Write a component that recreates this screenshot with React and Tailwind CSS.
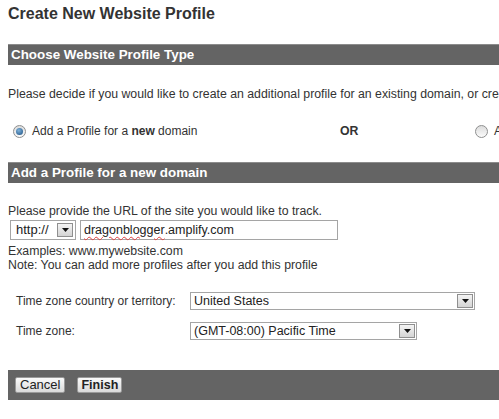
import React from 'react';

const DropButton = () => (
  <span className="flex h-full w-[16px] items-center justify-center border border-[#8f8f8f] bg-gradient-to-b from-[#f4f4f4] to-[#d4d4d4]">
    <svg width="7" height="4" viewBox="0 0 7 4">
      <path d="M0 0 H7 L3.5 4 Z" fill="#111" />
    </svg>
  </span>
);

const SelectBox = ({ value, width }) => (
  <div
    className={`flex h-[18px] items-center justify-between border border-[#a5a5a5] bg-white p-px ${width}`}
  >
    <span className="pl-[2px] text-[12.5px] leading-[14px] text-[#222]">{value}</span>
    <DropButton />
  </div>
);

const Radio = ({ checked }) => (
  <span className="flex h-[13px] w-[13px] items-center justify-center rounded-full border border-[#8e8f8f] bg-gradient-to-b from-[#dcdcdc] to-[#fbfbfb]">
    {checked && <span className="h-[7px] w-[7px] rounded-full bg-[radial-gradient(circle_at_40%_35%,#7fb2da,#1b4f82)]" />}
  </span>
);

const SectionBar = ({ title, className }) => (
  <div
    className={`h-[21px] border-t border-[#8c8c8c] bg-[#646464] pl-[3px] text-[13.4px] font-bold leading-[20px] text-white ${className}`}
  >
    {title}
  </div>
);

const App = () => {
  return (
    <div className="h-[419px] w-[499px] overflow-hidden bg-white font-['Liberation_Sans',Arial,sans-serif] text-[12.3px] text-[#333]">
      <div className="w-[760px] pl-2 pt-[4px]">
        <h1 className="text-[16px] font-bold leading-[20px] text-[#333]">
          Create New Website Profile
        </h1>

        <SectionBar title="Choose Website Profile Type" className="mt-[20px]" />

        <p className="mt-[21px] leading-[16px]">
          Please decide if you would like to create an additional profile for an existing domain, or create a new profile
        </p>

        <div className="mt-[21px] flex h-[16px] items-center">
          <span className="ml-[5px]">
            <Radio checked />
          </span>
          <span className="ml-[6px] w-[308px] text-[12px]">
            Add a Profile for a <b>new</b> domain
          </span>
          <span className="w-[135px] font-bold">OR</span>
          <Radio />
          <span className="ml-[6px]">Add a Profile for an existing domain</span>
        </div>

        <SectionBar title="Add a Profile for a new domain" className="mt-[23px]" />

        <p className="mt-[20px] leading-[16px]">Please provide the URL of the site you would like to track.</p>

        <div className="mt-px flex h-[20px] items-center">
          <div className="ml-[2px] flex h-[20px] w-[66px] items-center justify-between border border-[#a5a5a5] p-[2px]">
            <span className="pl-[3px] text-[13px] leading-[14px] text-[#222]">http://</span>
            <DropButton />
          </div>
          <div className="ml-[4px] flex h-[20px] w-[258px] items-center border border-[#a5a5a5] pl-[3px] text-[12.5px] text-[#222]">
            <span className="underline decoration-[#e04040] decoration-wavy decoration-1 underline-offset-2">dragonblogger</span>
            .amplify.com
          </div>
        </div>

        <p className="mt-[4px] leading-[14px]">Examples: www.mywebsite.com</p>
        <p className="leading-[14px]">Note: You can add more profiles after you add this profile</p>

        <div className="mt-[20px] flex items-center text-[12px]">
          <span className="ml-[8px] w-[174px]">Time zone country or territory:</span>
          <SelectBox value="United States" width="w-[285px]" />
        </div>

        <div className="mt-[12px] flex items-center text-[12px]">
          <span className="ml-[8px] w-[174px]">Time zone:</span>
          <SelectBox value="(GMT-08:00) Pacific Time" width="w-[227px]" />
        </div>

        <div className="mt-[30px] flex h-[30px] items-center gap-[12px] bg-[#646464] pl-[7px]">
          <button className="h-[16px] rounded-[2px] border border-[#9a9a9a] bg-gradient-to-b from-[#fafafa] to-[#dadada] px-[4px] text-[13px] leading-[14px] text-[#222]">
            Cancel
          </button>
          <button className="h-[16px] rounded-[2px] border border-[#9a9a9a] bg-gradient-to-b from-[#fafafa] to-[#dadada] px-[3px] text-[12.5px] font-bold leading-[14px] text-[#222]">
            Finish
          </button>
        </div>
      </div>
    </div>
  );
};

export default App;
